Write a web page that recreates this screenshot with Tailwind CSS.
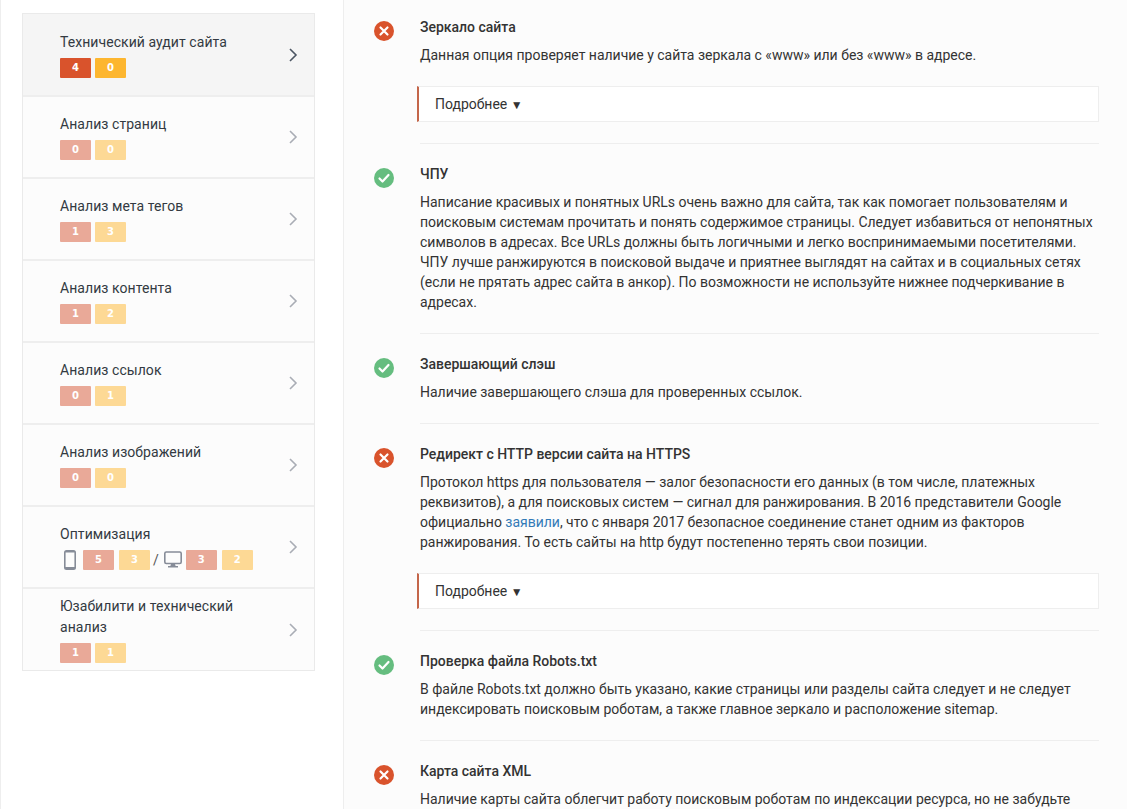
<!DOCTYPE html>
<html lang="ru"><head><meta charset="utf-8"><script src="https://cdn.jsdelivr.net/npm/@tailwindcss/browser@4"></script></head>
<body class="h-[809px] overflow-hidden bg-white font-['Roboto',sans-serif] text-[14px] text-[#333]">
<div class="flex h-[809px] border-l border-[#eee]">
<aside class="w-[342px] shrink-0 bg-white pt-[13px] pl-[21px]">
<nav class="w-[293px] border border-[#eaeaea] bg-[#fcfcfc]">
<a class="flex h-[83px] items-center justify-between border-b-2 border-[#eee] bg-[#f5f5f5] pr-[16px] pl-[37px]"><div class="self-start pt-[18px]"><div class="leading-[21px] tracking-[0.06px] text-[#333a42]">Технический аудит сайта</div><div class="mt-[5px] flex gap-[4px]"><span class="h-[20px] w-[31px] rounded-[1px] bg-[#d9532c] text-center font-['DejaVu_Sans'] text-[10px] leading-[20px] font-bold text-white">4</span><span class="h-[20px] w-[31px] rounded-[1px] bg-[#fdb62f] text-center font-['DejaVu_Sans'] text-[10px] leading-[20px] font-bold text-white">0</span></div></div><svg class="h-[16px] w-[10px] text-[#4b5563]" viewBox="0 0 10 16" fill="none" stroke="currentColor" stroke-width="1.6"><path d="M2 2l6 6-6 6"/></svg></a>
<a class="flex h-[82px] items-center justify-between border-b-2 border-[#eee] pr-[16px] pl-[37px]"><div class="self-start pt-[17px]"><div class="leading-[21px] tracking-[0.06px] text-[#333a42]">Анализ страниц</div><div class="mt-[5px] flex gap-[4px]"><span class="h-[20px] w-[31px] rounded-[1px] bg-[#e9a998] text-center font-['DejaVu_Sans'] text-[10px] leading-[20px] font-bold text-white">0</span><span class="h-[20px] w-[31px] rounded-[1px] bg-[#fdd995] text-center font-['DejaVu_Sans'] text-[10px] leading-[20px] font-bold text-white">0</span></div></div><svg class="h-[16px] w-[10px] text-[#a9adb5]" viewBox="0 0 10 16" fill="none" stroke="currentColor" stroke-width="1.6"><path d="M2 2l6 6-6 6"/></svg></a>
<a class="flex h-[82px] items-center justify-between border-b-2 border-[#eee] pr-[16px] pl-[37px]"><div class="self-start pt-[17px]"><div class="leading-[21px] tracking-[0.06px] text-[#333a42]">Анализ мета тегов</div><div class="mt-[5px] flex gap-[4px]"><span class="h-[20px] w-[31px] rounded-[1px] bg-[#e9a998] text-center font-['DejaVu_Sans'] text-[10px] leading-[20px] font-bold text-white">1</span><span class="h-[20px] w-[31px] rounded-[1px] bg-[#fdd995] text-center font-['DejaVu_Sans'] text-[10px] leading-[20px] font-bold text-white">3</span></div></div><svg class="h-[16px] w-[10px] text-[#a9adb5]" viewBox="0 0 10 16" fill="none" stroke="currentColor" stroke-width="1.6"><path d="M2 2l6 6-6 6"/></svg></a>
<a class="flex h-[82px] items-center justify-between border-b-2 border-[#eee] pr-[16px] pl-[37px]"><div class="self-start pt-[17px]"><div class="leading-[21px] tracking-[0.06px] text-[#333a42]">Анализ контента</div><div class="mt-[5px] flex gap-[4px]"><span class="h-[20px] w-[31px] rounded-[1px] bg-[#e9a998] text-center font-['DejaVu_Sans'] text-[10px] leading-[20px] font-bold text-white">1</span><span class="h-[20px] w-[31px] rounded-[1px] bg-[#fdd995] text-center font-['DejaVu_Sans'] text-[10px] leading-[20px] font-bold text-white">2</span></div></div><svg class="h-[16px] w-[10px] text-[#a9adb5]" viewBox="0 0 10 16" fill="none" stroke="currentColor" stroke-width="1.6"><path d="M2 2l6 6-6 6"/></svg></a>
<a class="flex h-[82px] items-center justify-between border-b-2 border-[#eee] pr-[16px] pl-[37px]"><div class="self-start pt-[17px]"><div class="leading-[21px] tracking-[0.06px] text-[#333a42]">Анализ ссылок</div><div class="mt-[5px] flex gap-[4px]"><span class="h-[20px] w-[31px] rounded-[1px] bg-[#e9a998] text-center font-['DejaVu_Sans'] text-[10px] leading-[20px] font-bold text-white">0</span><span class="h-[20px] w-[31px] rounded-[1px] bg-[#fdd995] text-center font-['DejaVu_Sans'] text-[10px] leading-[20px] font-bold text-white">1</span></div></div><svg class="h-[16px] w-[10px] text-[#a9adb5]" viewBox="0 0 10 16" fill="none" stroke="currentColor" stroke-width="1.6"><path d="M2 2l6 6-6 6"/></svg></a>
<a class="flex h-[82px] items-center justify-between border-b-2 border-[#eee] pr-[16px] pl-[37px]"><div class="self-start pt-[17px]"><div class="leading-[21px] tracking-[0.06px] text-[#333a42]">Анализ изображений</div><div class="mt-[5px] flex gap-[4px]"><span class="h-[20px] w-[31px] rounded-[1px] bg-[#e9a998] text-center font-['DejaVu_Sans'] text-[10px] leading-[20px] font-bold text-white">0</span><span class="h-[20px] w-[31px] rounded-[1px] bg-[#fdd995] text-center font-['DejaVu_Sans'] text-[10px] leading-[20px] font-bold text-white">0</span></div></div><svg class="h-[16px] w-[10px] text-[#a9adb5]" viewBox="0 0 10 16" fill="none" stroke="currentColor" stroke-width="1.6"><path d="M2 2l6 6-6 6"/></svg></a>
<a class="flex h-[82px] items-center justify-between border-b-2 border-[#eee] pr-[16px] pl-[37px]"><div class="self-start pt-[17px]"><div class="leading-[21px] tracking-[0.06px] text-[#333a42]">Оптимизация</div><div class="mt-[5px] flex items-center">
<svg class="ml-[4px] h-[20px] w-[12px]" viewBox="0 0 12 20"><rect x="0" y="0" width="12" height="20" rx="2.500" fill="#868c98"/><rect x="1.600" y="2.500" width="8.800" height="14.500" fill="#fcfcfc"/></svg>
<span class="ml-[7px] h-[20px] w-[31px] rounded-[1px] bg-[#e9a998] text-center font-['DejaVu_Sans'] text-[10px] leading-[20px] font-bold text-white">5</span><span class="ml-[5px] h-[20px] w-[31px] rounded-[1px] bg-[#fdd995] text-center font-['DejaVu_Sans'] text-[10px] leading-[20px] font-bold text-white">3</span>
<span class="ml-[3px] text-[14px] leading-[20px] text-[#555]">/</span>
<svg class="ml-[5px] h-[18px] w-[18px]" viewBox="0 0 18 18"><rect x="0.800" y="1" width="16.400" height="11.500" rx="1.500" fill="none" stroke="#868c98" stroke-width="1.600"/><path d="M7 13h4l.6 2H14v1.500H4V15h2.400z" fill="#868c98"/></svg>
<span class="ml-[4px] h-[20px] w-[31px] rounded-[1px] bg-[#e9a998] text-center font-['DejaVu_Sans'] text-[10px] leading-[20px] font-bold text-white">3</span><span class="ml-[5px] h-[20px] w-[31px] rounded-[1px] bg-[#fdd995] text-center font-['DejaVu_Sans'] text-[10px] leading-[20px] font-bold text-white">2</span></div></div><svg class="h-[16px] w-[10px] text-[#a9adb5]" viewBox="0 0 10 16" fill="none" stroke="currentColor" stroke-width="1.6"><path d="M2 2l6 6-6 6"/></svg></a>
<a class="flex h-[81px] items-center justify-between pr-[16px] pl-[37px]"><div class="self-start pt-[7px]"><div class="w-[200px] leading-[21px] tracking-[0.06px] text-[#333a42]">Юзабилити и технический анализ</div><div class="mt-[5px] flex gap-[4px]"><span class="h-[20px] w-[31px] rounded-[1px] bg-[#e9a998] text-center font-['DejaVu_Sans'] text-[10px] leading-[20px] font-bold text-white">1</span><span class="h-[20px] w-[31px] rounded-[1px] bg-[#fdd995] text-center font-['DejaVu_Sans'] text-[10px] leading-[20px] font-bold text-white">1</span></div></div><svg class="h-[16px] w-[10px] text-[#a9adb5]" viewBox="0 0 10 16" fill="none" stroke="currentColor" stroke-width="1.6"><path d="M2 2l6 6-6 6"/></svg></a>
</nav>
</aside>
<main class="w-[784px] shrink-0 border-l border-[#eee] bg-[#fcfcfc] pr-[28px] pl-[30px]">
<div class="-mt-[3px] flex flex-col leading-[20px] tracking-[-0.012px]">
<section class="flex gap-[26px] pt-[20px]"><svg class="mt-[4px] h-[20px] w-[20px] shrink-0" viewBox="0 0 20 20"><circle cx="10" cy="10" r="10" fill="#d9532c"/><path d="M6.500 6.500l7 7m0-7l-7 7" stroke="#fff" stroke-width="2.200" stroke-linecap="round"/></svg><div class="min-w-0 flex-1 border-b border-[#eee] pb-[21px]"><h3 class="font-medium">Зеркало сайта</h3><p class="mt-[8px]">Данная опция проверяет наличие у сайта зеркала с «www» или без «www» в адресе.</p><div class="mt-[21px] -ml-[3px] h-[36px] border border-l-2 border-[#eee] border-l-[#c4664a] bg-white pl-[16px] leading-[34px]">Подробнее <span class="text-[12px]">▼</span></div></div></section>
<section class="flex gap-[26px] pt-[20px]"><svg class="mt-[4px] h-[20px] w-[20px] shrink-0" viewBox="0 0 20 20"><circle cx="10" cy="10" r="10" fill="#65bd7f"/><path d="M5.500 10.500l3 3 6-6.500" fill="none" stroke="#fff" stroke-width="2.200" stroke-linecap="round" stroke-linejoin="round"/></svg><div class="min-w-0 flex-1 border-b border-[#eee] pb-[21px]"><h3 class="font-medium">ЧПУ</h3><p class="mt-[8px]">Написание красивых и понятных URLs очень важно для сайта, так как помогает пользователям и поисковым системам прочитать и понять содержимое страницы. Следует избавиться от непонятных символов в адресах. Все URLs должны быть логичными и легко воспринимаемыми посетителями. ЧПУ лучше ранжируются в поисковой выдаче и приятнее выглядят на сайтах и в социальных сетях (если не прятать адрес сайта в анкор). По возможности не используйте нижнее подчеркивание в адресах.</p></div></section>
<section class="flex gap-[26px] pt-[20px]"><svg class="mt-[4px] h-[20px] w-[20px] shrink-0" viewBox="0 0 20 20"><circle cx="10" cy="10" r="10" fill="#65bd7f"/><path d="M5.500 10.500l3 3 6-6.500" fill="none" stroke="#fff" stroke-width="2.200" stroke-linecap="round" stroke-linejoin="round"/></svg><div class="min-w-0 flex-1 border-b border-[#eee] pb-[21px]"><h3 class="font-medium">Завершающий слэш</h3><p class="mt-[8px]">Наличие завершающего слэша для проверенных ссылок.</p></div></section>
<section class="flex gap-[26px] pt-[20px]"><svg class="mt-[4px] h-[20px] w-[20px] shrink-0" viewBox="0 0 20 20"><circle cx="10" cy="10" r="10" fill="#d9532c"/><path d="M6.500 6.500l7 7m0-7l-7 7" stroke="#fff" stroke-width="2.200" stroke-linecap="round"/></svg><div class="min-w-0 flex-1 border-b border-[#eee] pb-[21px]"><h3 class="font-medium">Редирект с HTTP версии сайта на HTTPS</h3><p class="mt-[8px]">Протокол https для пользователя — залог безопасности его данных (в том числе, платежных реквизитов), а для поисковых систем — сигнал для ранжирования. В 2016 представители Google официально <a class="text-[#337ab7]">заявили</a>, что с января 2017 безопасное соединение станет одним из факторов ранжирования. То есть сайты на http будут постепенно терять свои позиции.</p><div class="mt-[21px] -ml-[3px] h-[36px] border border-l-2 border-[#eee] border-l-[#c4664a] bg-white pl-[16px] leading-[34px]">Подробнее <span class="text-[12px]">▼</span></div></div></section>
<section class="flex gap-[26px] pt-[20px]"><svg class="mt-[4px] h-[20px] w-[20px] shrink-0" viewBox="0 0 20 20"><circle cx="10" cy="10" r="10" fill="#65bd7f"/><path d="M5.500 10.500l3 3 6-6.500" fill="none" stroke="#fff" stroke-width="2.200" stroke-linecap="round" stroke-linejoin="round"/></svg><div class="min-w-0 flex-1 border-b border-[#eee] pb-[21px]"><h3 class="font-medium">Проверка файла Robots.txt</h3><p class="mt-[8px]">В файле Robots.txt должно быть указано, какие страницы или разделы сайта следует и не следует индексировать поисковым роботам, а также главное зеркало и расположение sitemap.</p></div></section>
<section class="flex gap-[26px] pt-[20px]"><svg class="mt-[4px] h-[20px] w-[20px] shrink-0" viewBox="0 0 20 20"><circle cx="10" cy="10" r="10" fill="#d9532c"/><path d="M6.500 6.500l7 7m0-7l-7 7" stroke="#fff" stroke-width="2.200" stroke-linecap="round"/></svg><div class="min-w-0 flex-1 pb-[21px]"><h3 class="font-medium">Карта сайта XML</h3><p class="mt-[8px]">Наличие карты сайта облегчит работу поисковым роботам по индексации ресурса, но не забудьте</p></div></section>
</div>
</main>
</div>
</body></html>
